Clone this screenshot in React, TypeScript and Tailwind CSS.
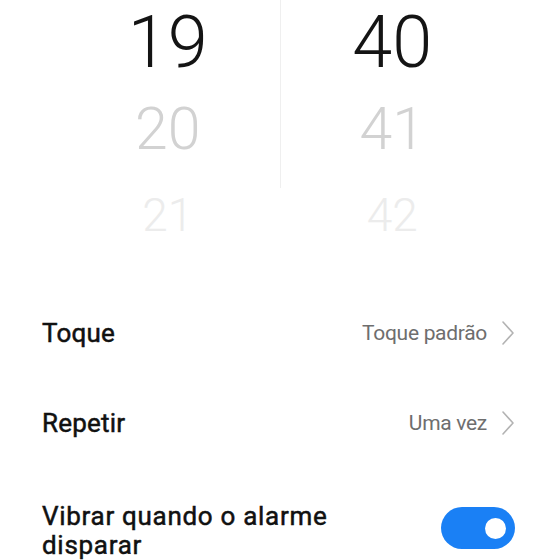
const HOURS = [
  { value: '19', className: 'text-[72px] text-[#141414]' },
  { value: '20', className: 'text-[59px] text-[#d2d2d2]' },
  { value: '21', className: 'text-[46px] text-[#ececec]' },
]

const MINUTES = [
  { value: '40', className: 'text-[72px] text-[#141414]' },
  { value: '41', className: 'text-[59px] text-[#d2d2d2]' },
  { value: '42', className: 'text-[46px] text-[#ececec]' },
]

function Chevron() {
  return (
    <svg width="12" height="24" viewBox="0 0 12 24" fill="none" className="shrink-0">
      <polyline points="1,1 11,12 1,23" stroke="#b3b3b3" strokeWidth="1.6" strokeLinecap="round" strokeLinejoin="round" />
    </svg>
  )
}

function Column({ items }: { items: { value: string; className: string }[] }) {
  return (
    <div className="flex-1 flex flex-col">
      {items.map((item) => (
        <div key={item.value} className={`h-[86px] leading-[86px] text-center font-light ${item.className}`}>
          {item.value}
        </div>
      ))}
    </div>
  )
}

function LinkRow({ label, value }: { label: string; value: string }) {
  return (
    <div className="h-[90px] flex items-center justify-between pl-[42px] pr-[46px]">
      <span className="text-[26px] leading-[32px] font-normal tracking-[0.2px] text-[#111] [-webkit-text-stroke:0.5px_#111]">{label}</span>
      <div className="flex items-center gap-[15px]">
        <span className="text-[21px] leading-[32px] tracking-[-0.3px] text-[#6e6e6e]">{value}</span>
        <Chevron />
      </div>
    </div>
  )
}

export default function App() {
  return (
    <div className="w-[560px] h-[560px] overflow-hidden bg-white" style={{ fontFamily: 'Roboto, "Noto Sans", sans-serif' }}>
      <div className="flex px-14 h-[258px]">
        <Column items={HOURS} />
        <div className="w-px h-[188px] bg-[#efefef]" />
        <Column items={MINUTES} />
      </div>
      <div className="mt-[30px]">
        <LinkRow label="Toque" value="Toque padrão" />
        <LinkRow label="Repetir" value="Uma vez" />
        <div className="flex items-start justify-between pl-[42px] pr-[45px] pt-[34px]">
          <span className="w-[340px] text-[26px] leading-[29px] font-normal tracking-[0.7px] text-[#111] [-webkit-text-stroke:0.5px_#111]">Vibrar quando o alarme disparar</span>
          <div className="mt-[5px] w-[74px] h-[42px] rounded-full bg-[#1a80f5] flex items-center justify-end pr-[9px]">
            <div className="w-[21px] h-[21px] rounded-full bg-white" />
          </div>
        </div>
      </div>
    </div>
  )
}
